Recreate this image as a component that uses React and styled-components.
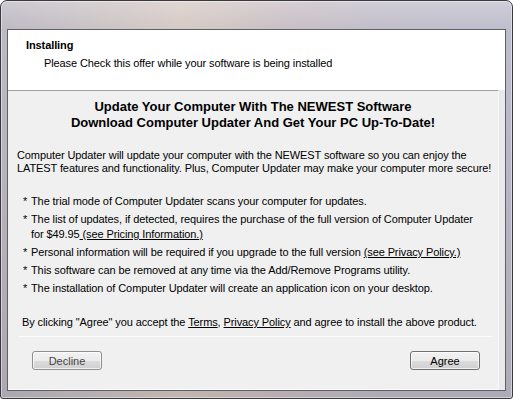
import React from "react";
import styled, { createGlobalStyle } from "styled-components";

const Global = createGlobalStyle`
  html, body {
    margin: 0;
    padding: 0;
    width: 513px;
    height: 399px;
    overflow: hidden;
    background: #ffffff;
  }
  * {
    box-sizing: border-box;
  }
`;

const Frame = styled.div`
  width: 513px;
  height: 399px;
  border: 1px solid #3a3a3e;
  border-radius: 7px 7px 3px 3px;
  padding: 28px 6px 7px 6px;
  background: linear-gradient(
      to bottom,
      rgba(255, 255, 255, 0.25) 0px,
      rgba(255, 255, 255, 0) 30px,
      rgba(80, 70, 70, 0.15) 100%
    ),
    linear-gradient(
      to right,
      #bdb9c3 0%,
      #c9c2c4 18%,
      #d6c9c3 35%,
      #c9bfc4 55%,
      #c0bdca 75%,
      #bebdcc 100%
    );
  box-shadow: inset 0 0 0 1px rgba(255, 255, 255, 0.45);
  font-family: "Liberation Sans", Arial, sans-serif;
  letter-spacing: -0.1px;
  color: #000;
`;

const Client = styled.div`
  height: 100%;
  border: 1px solid #5f5f68;
  display: flex;
  flex-direction: column;
  background: #fff;
`;

const Header = styled.div`
  height: 60px;
  background: #fff;
  padding: 7px 0 0 18px;
  flex-shrink: 0;
`;

const HeaderTitle = styled.div`
  font-size: 11px;
  font-weight: bold;
  line-height: 16px;
`;

const HeaderSub = styled.div`
  font-size: 11px;
  line-height: 16px;
  margin: 2px 0 0 18px;
`;

const Body = styled.div`
  flex: 1;
  display: flex;
  background: #e9e9e9;
  padding-right: 6px;
`;

const Panel = styled.div`
  flex: 1;
  background: #f0f0f0;
  border-top: 1px solid #a0a0a0;
  border-bottom: 1px solid #fbfbfb;
  border-right: 1px solid #f8f8f8;
  display: flex;
  flex-direction: column;
`;

const Heading = styled.div`
  margin-top: 8px;
  text-align: center;
  font-size: 13px;
  font-weight: bold;
  line-height: 16px;
  letter-spacing: 0;
`;

const Para = styled.p`
  margin: 18px 0 0 9px;
  font-size: 11px;
  line-height: 13px;
  white-space: nowrap;
`;

const List = styled.ul`
  list-style: none;
  margin: 19px 0 0 15px;
  padding: 0;
  display: flex;
  flex-direction: column;
  gap: 3px;
`;

const Item = styled.li`
  display: flex;
  font-size: 11px;
  line-height: 15px;
  white-space: nowrap;
`;

const Star = styled.span`
  width: 8px;
  flex-shrink: 0;
`;

const Link = styled.span`
  text-decoration: underline;
`;

const Consent = styled.p`
  margin: 20px 0 0 14px;
  font-size: 11px;
  line-height: 13px;
  white-space: nowrap;
`;

const Rule = styled.div`
  margin: 7px 6px 0 11px;
  height: 1px;
  background: #d0d0d0;
  border-bottom: 1px solid #fcfcfc;
`;

const Buttons = styled.div`
  display: flex;
  justify-content: space-between;
  padding: 0 18px 0 24px;
  margin-top: 14px;
`;

const Button = styled.button`
  width: 70px;
  height: 19px;
  padding: 0;
  border: 1px solid ${(p) => (p.$primary ? "#707070" : "#8e8f8f")};
  border-radius: 3px;
  background: linear-gradient(
    to bottom,
    #f2f2f2 0%,
    #ebebeb 50%,
    #dddddd 51%,
    #cfcfcf 100%
  );
  box-shadow: inset 0 0 0 1px rgba(255, 255, 255, 0.7);
  font-family: "Liberation Sans", Arial, sans-serif;
  font-size: 11px;
  color: ${(p) => (p.$primary ? "#000" : "#444")};
`;

const bullets = [
  ["The trial mode of Computer Updater scans your computer for updates."],
  [
    "The list of updates, if detected, requires the purchase of the full version of Computer Updater",
    "for $49.95",
    " (see Pricing Information.)",
  ],
  [
    "Personal information will be required if you upgrade to the full version ",
    null,
    "(see Privacy Policy.)",
  ],
  ["This software can be removed at any time via the Add/Remove Programs utility."],
  ["The installation of Computer Updater will create an application icon on your desktop."],
];

export default function App() {
  return (
    <>
      <Global />
      <Frame>
        <Client>
          <Header>
            <HeaderTitle>Installing</HeaderTitle>
            <HeaderSub>
              Please Check this offer while your software is being installed
            </HeaderSub>
          </Header>
          <Body>
            <Panel>
              <Heading>
                Update Your Computer With The NEWEST Software
                <br />
                Download Computer Updater And Get Your PC Up-To-Date!
              </Heading>
              <Para>
                Computer Updater will update your computer with the NEWEST
                software so you can enjoy the
                <br />
                LATEST features and functionality. Plus, Computer Updater may
                make your computer more secure!
              </Para>
              <List>
                {bullets.map(([text, second, link], i) => (
                  <Item key={i}>
                    <Star>*</Star>
                    <span>
                      {text}
                      {second && (
                        <>
                          <br />
                          {second}
                        </>
                      )}
                      {link && <Link>{link}</Link>}
                    </span>
                  </Item>
                ))}
              </List>
              <Consent>
                By clicking "Agree" you accept the <Link>Terms</Link>,{" "}
                <Link>Privacy Policy</Link> and agree to install the above
                product.
              </Consent>
              <Rule />
              <Buttons>
                <Button>Decline</Button>
                <Button $primary>Agree</Button>
              </Buttons>
            </Panel>
          </Body>
        </Client>
      </Frame>
    </>
  );
}
